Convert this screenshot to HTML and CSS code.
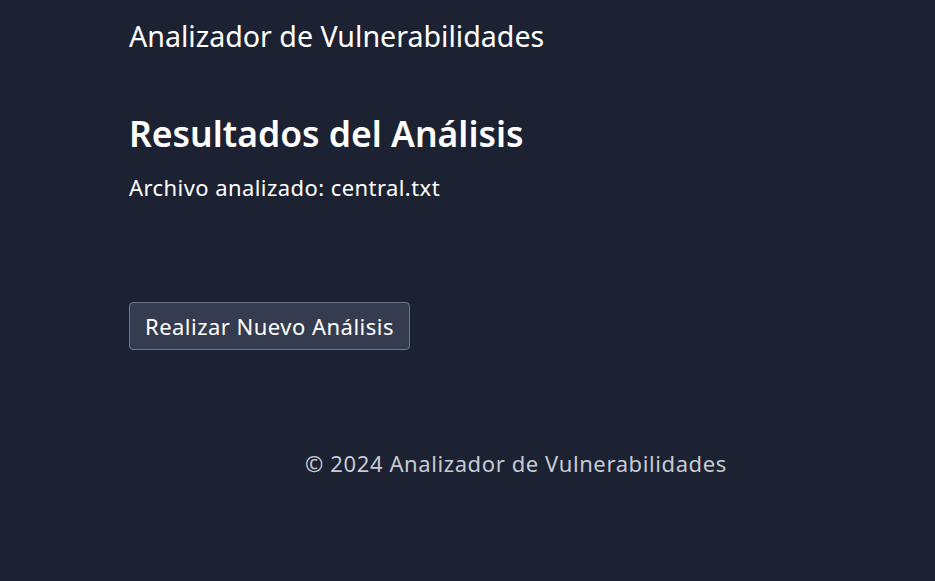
FILE: index.html
```html
<!DOCTYPE html>
<html lang="es">
<head>
<meta charset="utf-8">
<title>Resultados del Análisis</title>
<link rel="stylesheet" href="styles.css">
</head>
<body>
<div class="page">
  <header class="header">
    <h1 class="brand">Analizador de Vulnerabilidades</h1>
  </header>
  <main class="main">
    <h2 class="title">Resultados del Análisis</h2>
    <p class="file">Archivo analizado: central.txt</p>
    <div class="results"></div>
    <a class="btn" href="#">Realizar Nuevo Análisis</a>
  </main>
  <footer class="footer">
    <p>© 2024 Analizador de Vulnerabilidades</p>
  </footer>
</div>
</body>
</html>
```
FILE: styles.css
```css
html, body {
  margin: 0;
  padding: 0;
  background: #1d2232;
  height: 100%;
}
body {
  font-family: "Noto Sans", "Open Sans", sans-serif;
  color: #ffffff;
}
.page {
  padding: 0 32px 0 129px;
}
.header {
  padding-top: 17px;
}
.brand {
  margin: 0;
  font-size: 28.6px;
  font-weight: 400;
  line-height: 38px;
}
.main {
  padding-top: 56px;
}
.title {
  margin: 0;
  font-size: 35.5px;
  font-weight: 600;
  line-height: 44px;
}
.file {
  margin: 18px 0 0;
  font-size: 22px;
  letter-spacing: 0.43px;
  line-height: 28px;
}
.results {
  height: 101px;
}
.btn {
  display: inline-block;
  box-sizing: border-box;
  height: 48px;
  padding: 0 15px;
  line-height: 46px;
  font-size: 22px;
  letter-spacing: 0.48px;
  color: #ffffff;
  text-decoration: none;
  background: #363c4f;
  border: 1px solid #6e768a;
  border-radius: 4px;
}
.footer {
  padding-top: 99px;
  text-align: center;
}
.footer p {
  margin: 0;
  font-size: 22px;
  letter-spacing: 0.6px;
  line-height: 28px;
  color: #c6cad3;
}
```
